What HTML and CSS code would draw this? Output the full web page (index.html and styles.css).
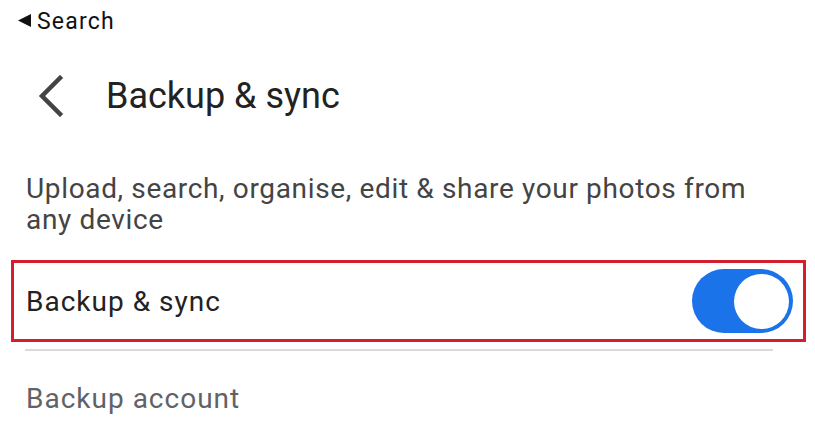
FILE: index.html
```html
<!DOCTYPE html>
<html lang="en">
<head>
    <meta charset="UTF-8">
    <meta name="viewport" content="width=device-width, initial-scale=1.0">
    <title>Backup &amp; sync</title>
    <link rel="stylesheet" href="styles.css">
</head>
<body>
    <div class="status-bar">
        <svg class="status-back" width="14" height="14" viewBox="0 0 14 14">
            <polygon points="13,0 13,13 0,6.5" fill="#111111"/>
        </svg>
        <span class="status-label">Search</span>
    </div>

    <div class="header">
        <svg class="back-icon" width="28" height="42" viewBox="0 0 28 42">
            <polyline points="24,3 6,21 24,39" fill="none" stroke="#444444" stroke-width="4.5" stroke-linecap="square"/>
        </svg>
        <h1>Backup &amp; sync</h1>
    </div>

    <p class="description">Upload, search, organise, edit &amp; share your photos from any device</p>

    <div class="setting-row highlighted">
        <span class="setting-label">Backup &amp; sync</span>
        <div class="toggle on">
            <div class="knob"></div>
        </div>
    </div>

    <div class="divider"></div>

    <div class="setting-row account">
        <span class="setting-label muted">Backup account</span>
    </div>
</body>
</html>
```

FILE: styles.css
```css
body {
    font-family: Roboto, "Noto Sans", Arial, sans-serif;
    margin: 0;
    background-color: #ffffff;
    color: #222222;
}
.status-bar {
    display: flex;
    align-items: center;
    height: 24px;
    padding: 9px 0 0 18px;
    font-size: 23px;
    letter-spacing: 1.2px;
    color: #111111;
}
.status-back {
    margin-right: 5px;
}
.header {
    display: flex;
    align-items: center;
    height: 58px;
    margin-top: 34px;
    padding-left: 36px;
}
.header h1 {
    margin: 0 0 0 42px;
    font-size: 36px;
    font-weight: 400;
    color: #222222;
}
.description {
    margin: 48px 40px 0 26px;
    font-size: 28px;
    line-height: 31px;
    letter-spacing: 0.65px;
    color: #444444;
}
.setting-row {
    display: flex;
    align-items: center;
    justify-content: space-between;
    height: 76px;
    padding: 0 10px 0 12px;
}
.highlighted {
    margin: 25px 9px 0 11px;
    border: 3px solid #d21f2d;
}
.setting-label {
    font-size: 28px;
    letter-spacing: 1px;
}
.muted {
    color: #5f6368;
}
.account {
    margin: 9px 9px 0 14px;
}
.toggle {
    width: 101px;
    height: 64px;
    border-radius: 32px;
    background-color: #1a73e8;
    display: flex;
    align-items: center;
    justify-content: flex-end;
    padding: 0 4px;
    box-sizing: border-box;
}
.knob {
    width: 55px;
    height: 55px;
    border-radius: 50%;
    background-color: #ffffff;
}
.divider {
    height: 2px;
    margin: 7px 42px 0 25px;
    background-color: #dadada;
}
```
